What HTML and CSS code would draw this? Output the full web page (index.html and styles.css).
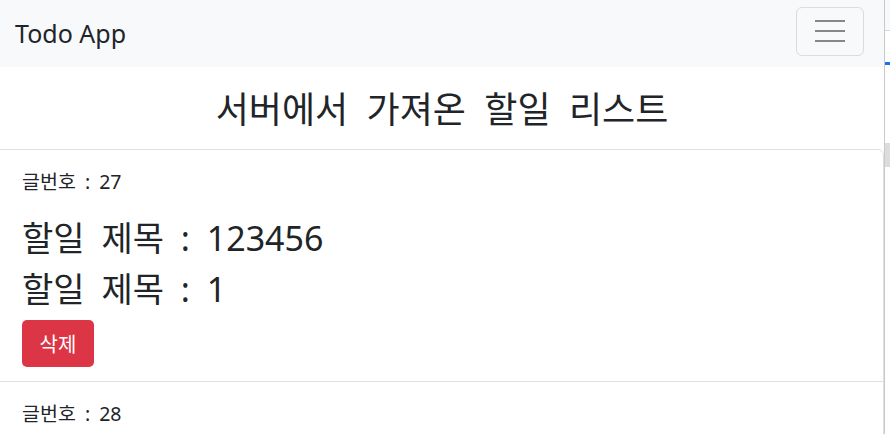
FILE: index.html
```html
<!doctype html>
<html>
  <head>
    <title>Todo App</title>
    <link rel="stylesheet" href="styles.css">
  </head>
  <body>
    <div class="page">
      <div class="app">
        <nav class="navbar">
          <a class="brand" href="#">Todo App</a>
          <button class="toggler" type="button">
            <span class="toggler-bar"></span>
            <span class="toggler-bar"></span>
            <span class="toggler-bar"></span>
          </button>
        </nav>

        <h2 class="page-title">서버에서 가져온 할일 리스트</h2>

        <div class="todo-list">
          <div class="todo-item">
            <p class="todo-no">글번호 : 27</p>
            <h2 class="todo-title">할일 제목 : 123456</h2>
            <h2 class="todo-title">할일 제목 : 1</h2>
            <button class="btn-delete" type="button">삭제</button>
          </div>
          <div class="todo-item">
            <p class="todo-no">글번호 : 28</p>
          </div>
        </div>
      </div>

      <div class="edge">
        <div class="edge-top"></div>
        <div class="edge-mark"></div>
        <div class="edge-thumb"></div>
      </div>
    </div>
  </body>
</html>
```

FILE: styles.css
```css
* {
  margin: 0;
  padding: 0;
  box-sizing: border-box;
  font-family: "Noto Sans", "Noto Sans CJK KR", sans-serif;
}

body {
  height: 100vh;
  overflow: hidden;
  background: #fff;
  color: #212529;
}

.page {
  display: grid;
  grid-template-columns: 1fr 6px;
  height: 100%;
}

.app {
  overflow: hidden;
}

.navbar {
  height: 67px;
  padding: 0 20px 0 15px;
  display: flex;
  align-items: center;
  justify-content: space-between;
  background: #f8f9fa;
}

.brand {
  font-size: 25px;
  color: #212529;
  text-decoration: none;
  margin-top: -1px;
}

.toggler {
  width: 68px;
  height: 49px;
  margin-top: -5px;
  border: 1px solid #dcdcdc;
  border-radius: 6px;
  background: transparent;
  display: flex;
  flex-direction: column;
  align-items: center;
  justify-content: center;
  gap: 8px;
  cursor: pointer;
}

.toggler-bar {
  display: block;
  width: 30px;
  height: 2px;
  background: #878787;
}

.page-title {
  font-size: 36px;
  font-weight: 400;
  line-height: 46px;
  word-spacing: 9px;
  text-align: center;
  padding: 20px 0 16px;
}

.todo-list {
  margin-left: -8px;
  border: 1px solid #dfdfdf;
  border-radius: 6px;
}

.todo-item {
  padding: 18px 21px 14px 29px;
}

.todo-item + .todo-item {
  border-top: 1px solid #dfdfdf;
}

.todo-no {
  font-size: 19.5px;
  line-height: 28px;
  word-spacing: 4px;
  margin-bottom: 17px;
}

.todo-title {
  font-size: 34px;
  font-weight: 400;
  line-height: 51px;
  word-spacing: 8px;
}

.btn-delete {
  margin-top: 5px;
  width: 72px;
  height: 47px;
  border: none;
  border-radius: 5px;
  background: #dc3545;
  color: #fff;
  font-size: 20px;
  cursor: pointer;
}

.edge {
  border-left: 1px solid #c9c9c9;
  background: #fff;
}

.edge-top {
  height: 31px;
  background: #f8f9fa;
  border-bottom: 1px solid #d6d6d6;
  margin-bottom: 31px;
}

.edge-mark {
  height: 3px;
  background: #1a73e8;
  margin-bottom: 78px;
}

.edge-thumb {
  height: 24px;
  background: #dcdcdc;
}
```
